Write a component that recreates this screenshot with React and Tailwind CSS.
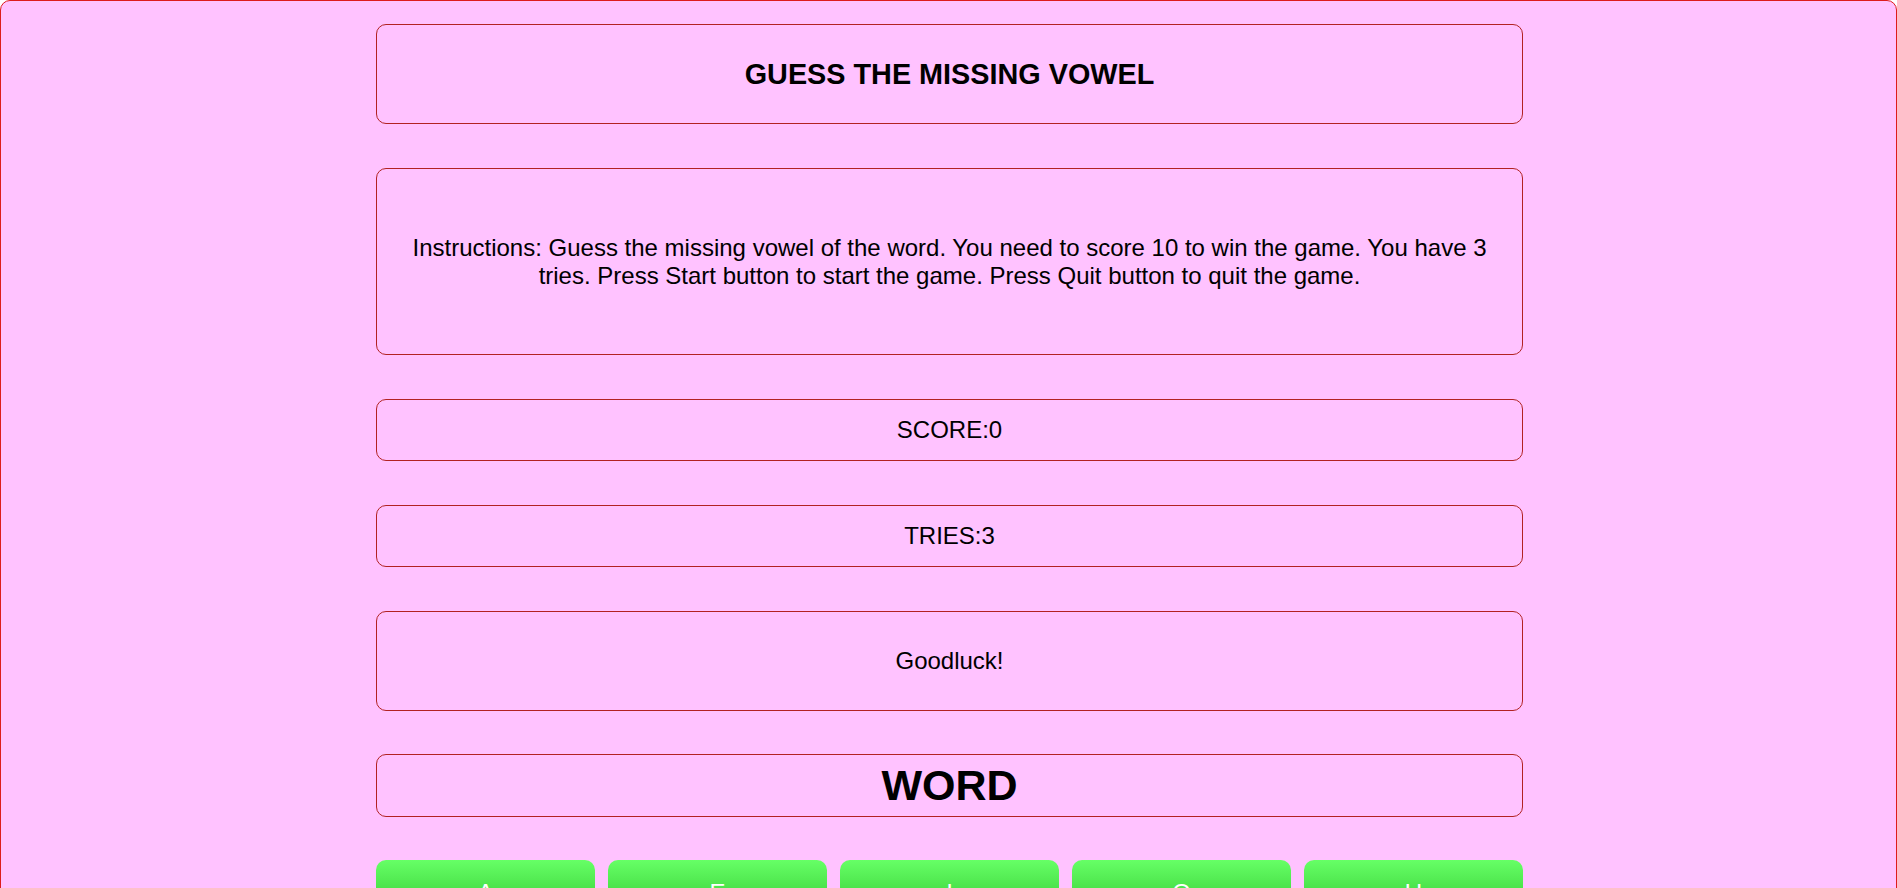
export default function App() {
  const box =
    "w-[1147px] flex items-center justify-center text-center rounded-[10px] border border-[#b22222] text-black";
  const vowels = ["A", "E", "I", "O", "U"];
  return (
    <div
      className="min-h-screen bg-[#ffc2ff] border border-[#dd1c1c] rounded-[10px] pt-[23px] pb-[40px]"
      style={{ fontFamily: '"Liberation Sans", Arial, sans-serif' }}
    >
      <div className="flex flex-col items-center pl-[2px]">
        <div className={`${box} h-[100px]`}>
          <h1 className="text-[28.8px] font-bold leading-none">GUESS THE MISSING VOWEL</h1>
        </div>
        <div className={`${box} h-[187px] px-[30px] mt-[44px]`}>
          <p className="text-[24px] leading-[27.6px]">
            Instructions: Guess the missing vowel of the word. You need to score 10 to win the game. You have 3 tries. Press Start button to start the game. Press Quit button to quit the game.
          </p>
        </div>
        <div className={`${box} h-[62px] mt-[44px]`}>
          <p className="text-[24px]">SCORE:0</p>
        </div>
        <div className={`${box} h-[62px] mt-[44px]`}>
          <p className="text-[24px]">TRIES:3</p>
        </div>
        <div className={`${box} h-[100px] mt-[44px]`}>
          <p className="text-[24px]">Goodluck!</p>
        </div>
        <div className={`${box} h-[63px] mt-[43px]`}>
          <p className="text-[43px] font-bold leading-none">WORD</p>
        </div>
        <div className="w-[1147px] flex gap-[13px] mt-[43px]">
          {vowels.map((v) => (
            <button
              key={v}
              className="flex-1 h-[65px] rounded-[10px] bg-gradient-to-b from-[#66ff66] to-[#22c022] text-white text-[24px] flex items-center justify-center"
            >
              {v}
            </button>
          ))}
        </div>
      </div>
    </div>
  );
}
